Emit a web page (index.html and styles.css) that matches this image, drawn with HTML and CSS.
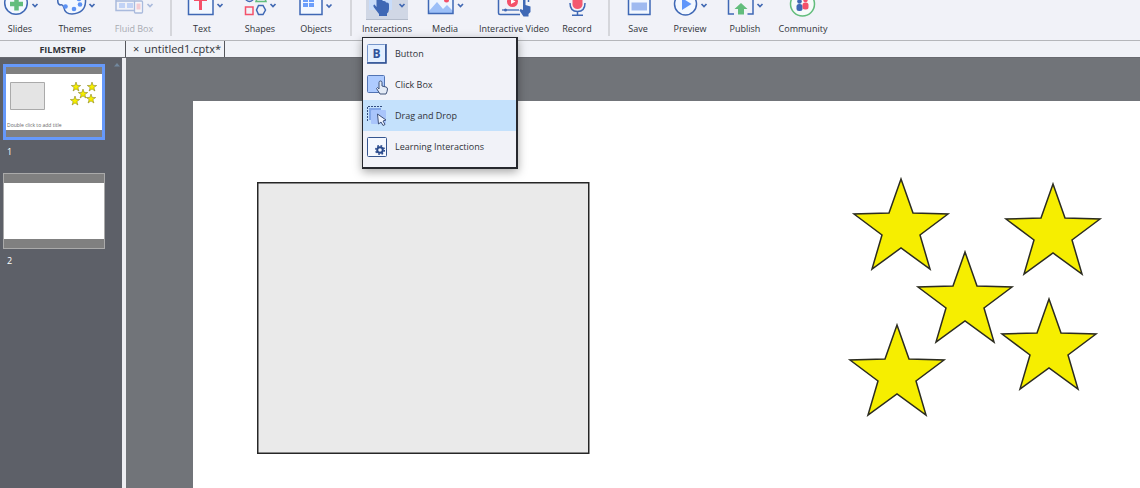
FILE: index.html
```
<!DOCTYPE html>
<html lang="en">
<head>
<meta charset="utf-8">
<title>untitled1.cptx</title>
<link rel="stylesheet" href="styles.css">
</head>
<body>
<svg class="defs" aria-hidden="true">
  <defs>
    <path id="chev" d="M-2.5-1.5 0 1 2.500-1.500" fill="none" stroke="#4269b3" stroke-width="1.700"/>
    <path id="star" d="M0 0 12 34 47 35 19 56 29 90 0 69-29 90-19 56-47 35-12 34Z"/>
    <path id="hand" d="M5-7q1.500 0 1.500 1.500V1q3-.5 3.500 1 3-.5 3 1.500 3-.5 3 2V10q0 3-2 4.500V17H6v-2L1 8.500Q-.5 6 1.500 5.500L3.500 8V-5.500Q3.500-7 5-7Z"/>
    <g id="stars">
      <use href="#star" x="708" y="78"/>
      <use href="#star" x="860" y="83"/>
      <use href="#star" x="772" y="151"/>
      <use href="#star" x="856" y="198"/>
      <use href="#star" x="704" y="224"/>
    </g>
  </defs>
</svg>
<div class="app">
  <header class="toolbar">
    <div class="group group-slides">
      <button class="tool"><svg class="icon" viewBox="-4 0 48 20"><circle cx="16" cy="3" r="11.300" fill="#f3f8ff" stroke="#3f68b5" stroke-width="1.500"/><path d="M16.500-3V10.500M10 4h13" stroke="#62bd7c" stroke-width="4.500"/><use href="#chev" x="35" y="5.500"/></svg><span>Slides</span></button>
      <button class="tool"><svg class="icon" viewBox="51 0 48 20"><path d="M58-2q-1 6 2 7 3-1 4 3 1 6 8 6 13-1 13.500-12V-8H58Z" fill="#f3f8ff" stroke="#3f68b5" stroke-width="1.500"/><g fill="#5c93f5"><circle cx="65.500" cy="6.500" r="2.300"/><circle cx="74" cy="9" r="2.300"/><circle cx="80" cy="4.500" r="2.300"/><circle cx="79" cy="-1" r="2.300"/></g><use href="#chev" x="92" y="5.500"/></svg><span>Themes</span></button>
      <button class="tool" disabled><svg class="icon faded" viewBox="110 0 48 20"><path d="M116-3V10.500h18M116 1h19" fill="none" stroke="#3f68b5" stroke-width="1.500"/><path d="M119 3h6v5h-6zM127 3h6v5h-6z" fill="#7da7f5"/><rect x="134.500" y="1" width="8" height="12" rx="1" fill="#fff" stroke="#3f68b5" stroke-width="1.300"/><path d="M136.500 3.500h4v6h-4z" fill="#f6959e"/><path d="M135-1h7V-4" fill="none" stroke="#3f68b5"/><use href="#chev" x="150" y="5.500"/></svg><span>Fluid Box</span></button>
    </div>
    <i class="rule"></i>
    <div class="group group-insert">
      <button class="tool"><svg class="icon" viewBox="178 0 48 20"><path d="M188.500-2V14.500h24.500V-2" fill="#f3f8ff" stroke="#3f68b5" stroke-width="1.500"/><path d="M200.500-3V10M195.500 1V-.5H205.500V1" fill="none" stroke="#f4516a" stroke-width="3"/><use href="#chev" x="220" y="5.500"/></svg><span>Text</span></button>
      <button class="tool"><svg class="icon" viewBox="236 0 48 20"><g fill="none" stroke-width="1.500"><circle cx="249.500" cy="-2.500" r="4" stroke="#3f68b5"/><path d="M256 1.500h10L264-4h-6z" stroke="#62bd7c"/><path d="M245.500 7h7.500v7.500h-7.500z" stroke="#f4516a"/><path d="m258.500 5.500h4.500l2.500 4.500-2.500 4.500h-4.500L256.500 10z" stroke="#3f68b5"/></g><use href="#chev" x="273" y="5.500"/></svg><span>Shapes</span></button>
      <button class="tool"><svg class="icon" viewBox="292 0 48 20"><path d="M300-2V14.500h22V-2" fill="#f3f8ff" stroke="#3f68b5" stroke-width="1.500"/><path d="M303-3h5v5h-5zM309-3h5v5h-5zM303 3h5v4h-5zM309 3h5v4h-5z" fill="#6c9ffb"/><use href="#chev" x="329" y="6"/></svg><span>Objects</span></button>
    </div>
    <i class="rule"></i>
    <div class="group group-media">
      <button class="tool active" aria-expanded="true"><svg class="icon" viewBox="363 0 48 20"><path d="M369-1h23V10h-23z" fill="#c8dcfa"/><use href="#hand" x="373" y="-1" fill="#3f68b5"/><use href="#chev" x="402" y="5.500"/></svg><span>Interactions</span></button>
      <button class="tool"><svg class="icon" viewBox="421 0 48 20"><path d="M428.500-2V13.500h24.500V-2" fill="#eef5ff"/><path d="m429 11 8-9 6 7 4-4 6 6v2h-24z" fill="#9dc0f8"/><circle cx="446.500" cy="0" r="2.500" fill="#f4516a"/><path d="M428.500-2V13.500h24.500V-2" fill="none" stroke="#3f68b5" stroke-width="1.500"/><use href="#chev" x="460.500" y="5.500"/></svg><span>Media</span></button>
      <button class="tool"><svg class="icon" viewBox="490 0 48 20"><path d="M498.500-2V13q0 1.500 1.500 1.500h20M528.500-2V2" fill="none" stroke="#3f68b5" stroke-width="1.500"/><path d="M502 10h17" stroke="#3f68b5" stroke-width="1.300"/><circle cx="505.500" cy="10" r="1.500" fill="#3f68b5"/><circle cx="512.500" cy="1.500" r="5.500" fill="#f4516a"/><path d="m511-1 4.500 2.500L511 4z" fill="#fff"/><path d="M523-2h2.500V5l5 1.500V12l-2 2v2.500h-5l-4-6 1-1.500 2.500 1z" fill="#3f68b5"/></svg><span>Interactive Video</span></button>
      <button class="tool"><svg class="icon" viewBox="554 0 48 20"><path d="M573.500-2h10V5q-1 4-5 4t-5-4z" fill="#f4596f"/><path d="M571 3q0 8.500 7.500 8.500T586 3M578.500 11.500V15M573 15.200h11" fill="none" stroke="#3f68b5" stroke-width="1.500"/></svg><span>Record</span></button>
    </div>
    <i class="rule"></i>
    <div class="group group-output">
      <button class="tool"><svg class="icon" viewBox="614 0 48 20"><path d="M628.500-2V14.500H650V-2" fill="#f3f8ff" stroke="#3f68b5" stroke-width="1.500"/><path d="M631.500 2.500h15.500v8h-15.500z" fill="#9fbaf0"/></svg><span>Save</span></button>
      <button class="tool"><svg class="icon" viewBox="666 0 48 20"><circle cx="685.500" cy="4" r="11" fill="#f3f8ff" stroke="#3f68b5" stroke-width="1.500"/><path d="M682-2v12l9.500-6z" fill="#5f96fb"/><use href="#chev" x="704" y="5.500"/></svg><span>Preview</span></button>
      <button class="tool"><svg class="icon" viewBox="721 0 48 20"><path d="M728.500-2V14h5.500M753-2V14h-5.500" fill="none" stroke="#3f68b5" stroke-width="1.500"/><path d="m741 3 6.500 6H744v5.500h-6V9h-3.500z" fill="#62bd7c"/><use href="#chev" x="760" y="5.500"/></svg><span>Publish</span></button>
      <button class="tool"><svg class="icon" viewBox="779 0 48 20"><circle cx="802.500" cy="4" r="12" fill="#f7fbfa" stroke="#62bd7c" stroke-width="1.500"/><g fill="#3f68b5"><circle cx="799.500" cy="1.500" r="2.300"/><rect x="796.500" y="4" width="6" height="7" rx="2.500"/></g><g fill="#f4516a"><circle cx="805.500" cy="0" r="2.300"/><rect x="802.500" y="2.500" width="6" height="7" rx="2.500"/></g></svg><span>Community</span></button>
    </div>
    <div class="menu" role="menu">
      <button class="entry" role="menuitem"><svg class="glyph" viewBox="0 0 22 22"><rect x="1.500" y="1.500" width="18" height="18" rx="1" fill="#e4efff" stroke="#7695ca"/><path d="M20 1v19H1" fill="none" stroke="#294b8e" stroke-width="1.500"/><text class="letter" x="10.500" y="15" text-anchor="middle">B</text></svg><span>Button</span></button>
      <button class="entry" role="menuitem"><svg class="glyph" viewBox="0 0 22 22"><rect x="1.500" y="1.500" width="17" height="17" rx="1" fill="#aecbff" stroke="#5274b4"/><path d="M14.500 7q1.500 0 1.500 1.500V12l4 1q1.500.5 1.500 2-.3 3-1.500 5H14l-3.500-5.500 1-1 1.500 1.500V8.500Q13 7 14.500 7Z" fill="#e4ebf6" stroke="#3f5279"/></svg><span>Click Box</span></button>
      <button class="entry chosen" role="menuitem"><svg class="glyph" viewBox="0 0 22 22"><path d="M1.500 16V1.500H16" fill="none" stroke="#344e80" stroke-dasharray="2 1"/><path d="M3 3h12v12H3z" fill="#82a6e7"/><rect x="5" y="5" width="15" height="14" rx="1" fill="#a9c5fb"/><path d="m11.500 9 1 10 2.500-2 2 3.500 2-1-2-3.500 3-1z" fill="#eef4ff" stroke="#3f5279"/></svg><span>Drag and Drop</span></button>
      <button class="entry" role="menuitem"><svg class="glyph" viewBox="0 0 22 22"><rect x="1.500" y="1.500" width="19" height="19" rx="1" fill="#f5f8ff" stroke="#36558f"/><circle cx="14" cy="14" r="2.800" fill="none" stroke="#29498c" stroke-width="2"/><circle cx="14" cy="14" r="4.300" fill="none" stroke="#29498c" stroke-width="1.500" stroke-dasharray="1.700 1.680"/></svg><span>Learning Interactions</span></button>
    </div>
  </header>
  <div class="tabs">
    <h2 class="panel-title">FILMSTRIP</h2>
    <div class="tab"><button class="close" aria-label="Close">×</button><span>untitled1.cptx*</span></div>
  </div>
  <main class="work">
    <aside class="filmstrip">
      <svg class="scroll-up" viewBox="0 0 6 4"><path d="m3 0 3 3.500H0z" fill="#72889e"/></svg>
      <button class="thumb current" aria-label="Slide 1">
        <svg class="preview" viewBox="0 0 96 57"><path d="M4.500 8.500h34v27h-34z" fill="#e4e4e4" stroke="#aaa"/><g class="mini-stars"><use href="#star" transform="translate(70 8) scale(.1)"/><use href="#star" transform="translate(86 8) scale(.1)"/><use href="#star" transform="translate(77 15) scale(.1)"/><use href="#star" transform="translate(85 20) scale(.1)"/><use href="#star" transform="translate(69 22) scale(.1)"/></g><text class="tiny" x="1" y="53">Double click to add title</text></svg>
      </button>
      <span class="number">1</span>
      <button class="thumb" aria-label="Slide 2"></button>
      <span class="number">2</span>
    </aside>
    <section class="stage">
      <svg class="slide">
        <rect x="64.750" y="81.750" width="331" height="270.500" fill="#eaeaea" stroke="#262626" stroke-width="1.500"/>
        <use href="#stars" fill="#f6ee00" stroke="#2c2c20" stroke-width="1.500"/>
      </svg>
    </section>
  </main>
</div>
</body>
</html>
```
FILE: styles.css
```
* { box-sizing: border-box; }
body {
  margin: 0;
  font: 9px/12px "Open Sans", "Noto Sans", sans-serif;
  color: #303238;
  background: #717479;
}
button {
  margin: 0;
  padding: 0;
  border: 0;
  background: none;
  font: inherit;
  color: inherit;
}
.defs { position: absolute; width: 0; height: 0; }
.app { display: flex; flex-direction: column; min-height: 100vh; }
.toolbar {
  position: relative;
  display: flex;
  height: 41px;
  background: #f1f2f8;
  border-bottom: 1px solid #b4b6ba;
}
.group { display: grid; }
.group-slides { grid-template-columns: 40px 70px 48px; margin-right: 12px; }
.group-insert { grid-template-columns: 36px 80px 32px; margin: 0 18px 0 12px; }
.group-media { grid-template-columns: 42px 74px 64px 62px; margin-left: 14px; }
.group-output { grid-template-columns: 40px 64px 46px 70px; margin-left: 8px; }
.rule { width: 2px; height: 36px; background: #d5d6db; }
.tool {
  display: flex;
  flex-direction: column;
  align-items: center;
  justify-content: flex-start;
  gap: 3px;
  white-space: nowrap;
}
.tool:disabled { color: #a8abb3; }
.icon { flex: none; width: 48px; height: 20px; }
.faded { opacity: .4; }
.active { background: linear-gradient(#d0d7e5 19px, #b3bbca 19px 20px, transparent 20px); }
.menu {
  position: absolute;
  z-index: 2;
  top: 37px;
  left: 362px;
  width: 156px;
  padding-bottom: 5px;
  background: #f1f2f8;
  border: 1px solid #26282e;
  border-width: 1px 2px 2px 1px;
  box-shadow: 0 3px 9px rgba(0, 0, 0, .35);
}
.entry {
  display: flex;
  align-items: center;
  gap: 7px;
  width: 100%;
  height: 31px;
  padding-left: 3px;
}
.chosen { background: #c4e1fc; }
.glyph { width: 22px; height: 22px; }
.letter { font: bold 12px "Open Sans", sans-serif; fill: #31529a; }
.tabs {
  display: flex;
  height: 17px;
  background: #f0f2f7;
  border-bottom: 1px solid #686a70;
}
.panel-title {
  width: 125px;
  margin: 0;
  font-size: 9px;
  line-height: 17px;
  text-align: center;
}
.tab {
  display: flex;
  align-items: center;
  gap: 5px;
  padding: 0 3px 0 7px;
  border: 1px solid #55575c;
  border-width: 0 1px;
  font-size: 11px;
}
.work { display: flex; flex: 1; }
.filmstrip {
  position: relative;
  display: flex;
  flex-direction: column;
  width: 126px;
  padding: 6px 17px 0 3px;
  background: #5d6068;
  border-right: 4px solid #edeef2;
}
.scroll-up { position: absolute; top: 5px; right: 2px; width: 6px; height: 4px; }
.thumb {
  width: 102px;
  height: 76px;
  border: 1px solid #aaa;
  background: linear-gradient(#808080 9px, #fff 9px calc(100% - 9px), #808080 calc(100% - 9px));
}
.current {
  border: 3px solid #6699fa;
  background: linear-gradient(#808080 7px, #fff 7px calc(100% - 7px), #808080 calc(100% - 7px));
}
.preview { display: block; width: 96px; height: 57px; }
.mini-stars { fill: #f6ee00; stroke: #77730c; stroke-width: 5px; }
.tiny { font: 5px "Open Sans", sans-serif; fill: #666; }
.number { padding: 6px 4px 15px; color: #fff; }
.stage { flex: 1; display: flex; padding: 43px 0 0 67px; }
.slide { flex: 1; display: block; width: 100%; background: #fff; }
```
